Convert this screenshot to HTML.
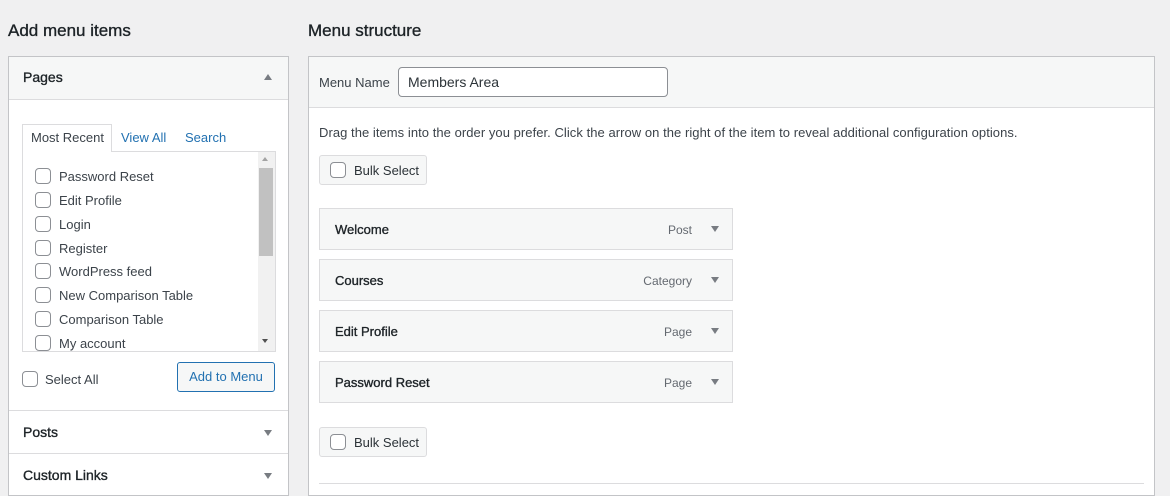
<!DOCTYPE html>
<html><head><meta charset="utf-8"><style>
*{box-sizing:border-box;margin:0;padding:0}
body{width:1170px;height:494px;background:#f0f0f1;font-family:"Liberation Sans",sans-serif;font-size:13px;color:#3c434a;position:relative;overflow:hidden}
.a{position:absolute}
h2{position:absolute;font-size:17px;font-weight:normal;color:#1d2327;-webkit-text-stroke:0.35px #1d2327}
.cb{position:absolute;width:16px;height:16px;border:1px solid #8c8f94;border-radius:4px;background:#fff}
.tri{position:absolute;width:0;height:0;border-left:4.5px solid transparent;border-right:4.5px solid transparent}
.dn{border-top:6px solid #787c82}
.up{border-bottom:6px solid #787c82}
.sec{position:absolute;left:8px;width:281px;background:#fff;border:1px solid #c3c4c7}
.hd{position:absolute;left:23px;font-size:14px;color:#1d2327;-webkit-text-stroke:0.35px #1d2327}
.item{position:absolute;left:319px;width:414px;height:42px;background:#f6f7f7;border:1px solid #dcdcde}
.item b{position:absolute;left:15px;top:13px;font-weight:normal;color:#1d2327;font-size:13px;-webkit-text-stroke:0.35px #1d2327}
.item span{position:absolute;right:40px;top:14px;font-size:12px;color:#646970}
.item i{position:absolute;right:13px;top:17px;width:0;height:0;border-left:4.5px solid transparent;border-right:4.5px solid transparent;border-top:6px solid #787c82}
.btn{position:absolute;background:#f6f7f7;border:1px solid #dcdcde;border-radius:3px}
</style></head><body>
<h2 style="left:8px;top:21px">Add menu items</h2>
<h2 style="left:308px;top:21px">Menu structure</h2>

<div class="sec" style="top:56px;height:440px"></div>
<div class="a" style="left:9px;top:57px;width:279px;height:43px;background:#f6f7f7;border-bottom:1px solid #dcdcde"></div>
<div class="hd" style="top:69px">Pages</div>
<div class="tri up" style="left:264px;top:74px"></div>

<div class="a" style="left:22px;top:124px;width:90px;height:28px;border:1px solid #dcdcde;border-bottom:none;background:#fff;z-index:2"></div>
<div class="a" style="left:31px;top:130px;z-index:3;color:#3c434a">Most Recent</div>
<div class="a" style="left:121px;top:130px;color:#2271b1">View All</div>
<div class="a" style="left:185px;top:130px;color:#2271b1">Search</div>
<div class="a" style="left:22px;top:151px;width:254px;height:201px;border:1px solid #dcdcde;background:#fff"></div>
<div class="a" style="left:258px;top:152px;width:17px;height:199px;background:#f1f1f1"></div>
<div class="a" style="left:259px;top:168px;width:14px;height:88px;background:#c1c1c1"></div>
<div class="tri" style="left:262px;top:157px;border-left-width:3.5px;border-right-width:3.5px;border-bottom:4px solid #a3a3a3"></div>
<div class="tri" style="left:262px;top:339px;border-left-width:3.5px;border-right-width:3.5px;border-top:4px solid #505050"></div>

<div class="cb" style="left:35px;top:168px"></div><div class="a" style="left:59px;top:169px">Password Reset</div>
<div class="cb" style="left:35px;top:192px"></div><div class="a" style="left:59px;top:193px">Edit Profile</div>
<div class="cb" style="left:35px;top:216px"></div><div class="a" style="left:59px;top:217px">Login</div>
<div class="cb" style="left:35px;top:240px"></div><div class="a" style="left:59px;top:241px">Register</div>
<div class="cb" style="left:35px;top:263px"></div><div class="a" style="left:59px;top:264px">WordPress feed</div>
<div class="cb" style="left:35px;top:287px"></div><div class="a" style="left:59px;top:288px">New Comparison Table</div>
<div class="cb" style="left:35px;top:311px"></div><div class="a" style="left:59px;top:312px">Comparison Table</div>
<div class="a" style="left:23px;top:333px;width:235px;height:18px;overflow:hidden">
<div class="cb" style="left:12px;top:2px"></div><div class="a" style="left:36px;top:3px;white-space:nowrap">My account</div></div>

<div class="cb" style="left:22px;top:371px"></div><div class="a" style="left:45px;top:372px">Select All</div>
<div class="a" style="left:177px;top:362px;width:98px;height:30px;border:1px solid #2271b1;border-radius:3px;background:#f6f7f7;color:#2271b1;text-align:center;line-height:28px">Add to Menu</div>

<div class="a" style="left:9px;top:410px;width:279px;height:1px;background:#dcdcde"></div>
<div class="hd" style="top:424px">Posts</div>
<div class="tri dn" style="left:264px;top:430px"></div>
<div class="a" style="left:9px;top:453px;width:279px;height:1px;background:#dcdcde"></div>
<div class="hd" style="top:467px">Custom Links</div>
<div class="tri dn" style="left:264px;top:473px"></div>

<div class="a" style="left:308px;top:56px;width:847px;height:440px;background:#fff;border:1px solid #c3c4c7"></div>
<div class="a" style="left:309px;top:57px;width:845px;height:51px;background:#f6f7f7;border-bottom:1px solid #dcdcde"></div>
<div class="a" style="left:319px;top:75px">Menu Name</div>
<div class="a" style="left:398px;top:67px;width:270px;height:30px;border:1px solid #8c8f94;border-radius:4px;background:#fff;padding-left:9px;line-height:28px;font-size:14px;color:#2c3338">Members Area</div>
<div class="a" style="left:319px;top:125px;font-size:13px;letter-spacing:0.05px">Drag the items into the order you prefer. Click the arrow on the right of the item to reveal additional configuration options.</div>
<div class="btn" style="left:319px;top:155px;width:108px;height:30px"></div>
<div class="cb" style="left:330px;top:162px"></div><div class="a" style="left:354px;top:163px;color:#2c3338">Bulk Select</div>

<div class="item" style="top:208px"><b>Welcome</b><span>Post</span><i></i></div>
<div class="item" style="top:259px"><b>Courses</b><span>Category</span><i></i></div>
<div class="item" style="top:310px"><b>Edit Profile</b><span>Page</span><i></i></div>
<div class="item" style="top:361px"><b>Password Reset</b><span>Page</span><i></i></div>

<div class="btn" style="left:319px;top:427px;width:108px;height:30px"></div>
<div class="cb" style="left:330px;top:434px"></div><div class="a" style="left:354px;top:435px;color:#2c3338">Bulk Select</div>
<div class="a" style="left:319px;top:483px;width:825px;height:1px;background:#dcdcde"></div>
</body></html>
